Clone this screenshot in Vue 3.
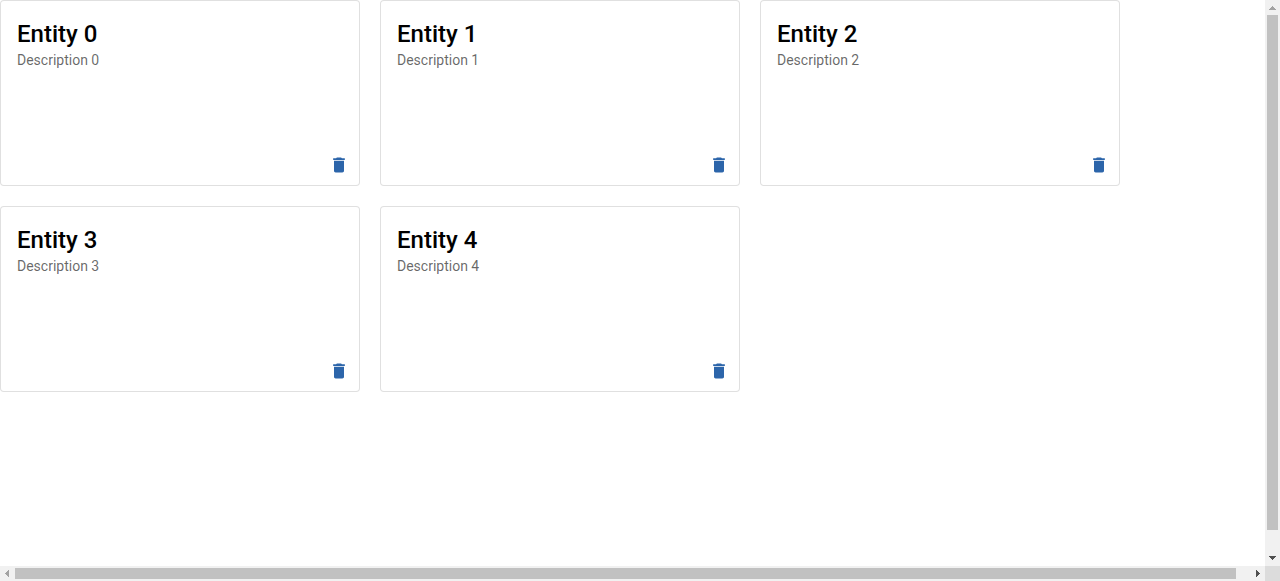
<script setup>
import { ref } from 'vue'

const entities = ref(
  Array.from({ length: 5 }, (_, i) => ({
    id: i,
    title: `Entity ${i}`,
    description: `Description ${i}`,
  })),
)

const pane = ref(null)

function remove(id) {
  entities.value = entities.value.filter((entity) => entity.id !== id)
}

function scroll(left, top) {
  pane.value.scrollBy({ left, top })
}
</script>

<template>
  <div class="window">
    <main ref="pane" class="viewport">
      <div class="page">
        <article v-for="entity in entities" :key="entity.id" class="card">
          <div class="content">
            <h2 class="title">{{ entity.title }}</h2>
            <p class="description">{{ entity.description }}</p>
          </div>
          <div class="actions">
            <button
              type="button"
              class="delete"
              :aria-label="`Delete ${entity.title}`"
              @click="remove(entity.id)"
            >
              <svg viewBox="0 0 24 24" aria-hidden="true">
                <path
                  d="M6 19c0 1.1.9 2 2 2h8c1.1 0 2-.9 2-2V7H6v12zM19 4h-3.5l-1-1h-5l-1 1H5v2h14V4z"
                />
              </svg>
            </button>
          </div>
        </article>
      </div>
    </main>

    <div class="bar vertical">
      <button type="button" class="step off" aria-label="Scroll up" @click="scroll(0, -40)">
        <svg viewBox="0 0 15 15" shape-rendering="crispEdges" aria-hidden="true">
          <path d="M7 6h1v1h1v1h1v1h1v1H4V9h1V8h1V7h1z" />
        </svg>
      </button>
      <div class="track">
        <div class="thumb"></div>
      </div>
      <button type="button" class="step" aria-label="Scroll down" @click="scroll(0, 40)">
        <svg viewBox="0 0 15 15" shape-rendering="crispEdges" aria-hidden="true">
          <path d="M4 5h7v1h-1v1H9v1H8v1H7V8H6V7H5V6H4z" />
        </svg>
      </button>
    </div>

    <div class="bar horizontal">
      <button type="button" class="step off" aria-label="Scroll left" @click="scroll(-40, 0)">
        <svg viewBox="0 0 15 15" shape-rendering="crispEdges" aria-hidden="true">
          <path d="M5 7h1V6h1V5h1V4h1v7H8v-1H7V9H6V8H5z" />
        </svg>
      </button>
      <div class="track">
        <div class="thumb"></div>
      </div>
      <button type="button" class="step" aria-label="Scroll right" @click="scroll(40, 0)">
        <svg viewBox="0 0 15 15" shape-rendering="crispEdges" aria-hidden="true">
          <path d="M6 4h1v1h1v1h1v1h1v1H9v1H8v1H7v1H6z" />
        </svg>
      </button>
    </div>

    <div class="corner"></div>
  </div>
</template>

<style>
body {
  margin: 0;
}
</style>

<style scoped>
.window {
  height: 100vh;
  display: grid;
  grid-template: minmax(0, 1fr) 15px / minmax(0, 1fr) 15px;
  background: #fff;
  font-family: Roboto, "Liberation Sans", sans-serif;
}

.viewport {
  overflow: auto;
  scrollbar-width: none;
}

.page {
  box-sizing: border-box;
  width: 100vw;
  min-height: calc(100vh + 8px);
  display: flex;
  flex-wrap: wrap;
  align-content: flex-start;
  gap: 20px;
}

.card {
  box-sizing: border-box;
  width: 360px;
  min-height: 186px;
  display: flex;
  flex-direction: column;
  justify-content: space-between;
  border: 1px solid rgba(0, 0, 0, 0.12);
  border-radius: 4px;
  background: #fff;
}

.content {
  padding: 16px;
}

.title {
  margin: 0;
  font-size: 24px;
  font-weight: 500;
  line-height: 34px;
  color: #000;
}

.description {
  margin: 0;
  font-size: 14px;
  line-height: 18px;
  color: rgba(0, 0, 0, 0.6);
}

.actions {
  display: flex;
  justify-content: flex-end;
  padding: 5px;
}

.delete {
  display: flex;
  padding: 5px;
  border: 0;
  border-radius: 50%;
  background: transparent;
  color: #2c65aa;
  cursor: pointer;
}

.delete svg {
  width: 20px;
  height: 20px;
  fill: currentColor;
}

.bar {
  display: flex;
  background: #f1f1f1;
}

.vertical {
  flex-direction: column;
}

.track {
  flex: 1;
  display: flex;
}

.vertical .track {
  flex-direction: column;
  padding: 0 2px;
}

.horizontal .track {
  padding: 2px 0;
}

.thumb {
  background: #c1c1c1;
}

.vertical .thumb {
  height: 96%;
}

.horizontal .thumb {
  width: calc(100% - 14px);
}

.step {
  display: flex;
  flex: none;
  padding: 0;
  border: 0;
  background: transparent;
  color: #505050;
}

.step.off {
  color: #a3a3a3;
}

.step svg {
  width: 15px;
  height: 15px;
  fill: currentColor;
}

.corner {
  background: #dcdcdc;
}
</style>
